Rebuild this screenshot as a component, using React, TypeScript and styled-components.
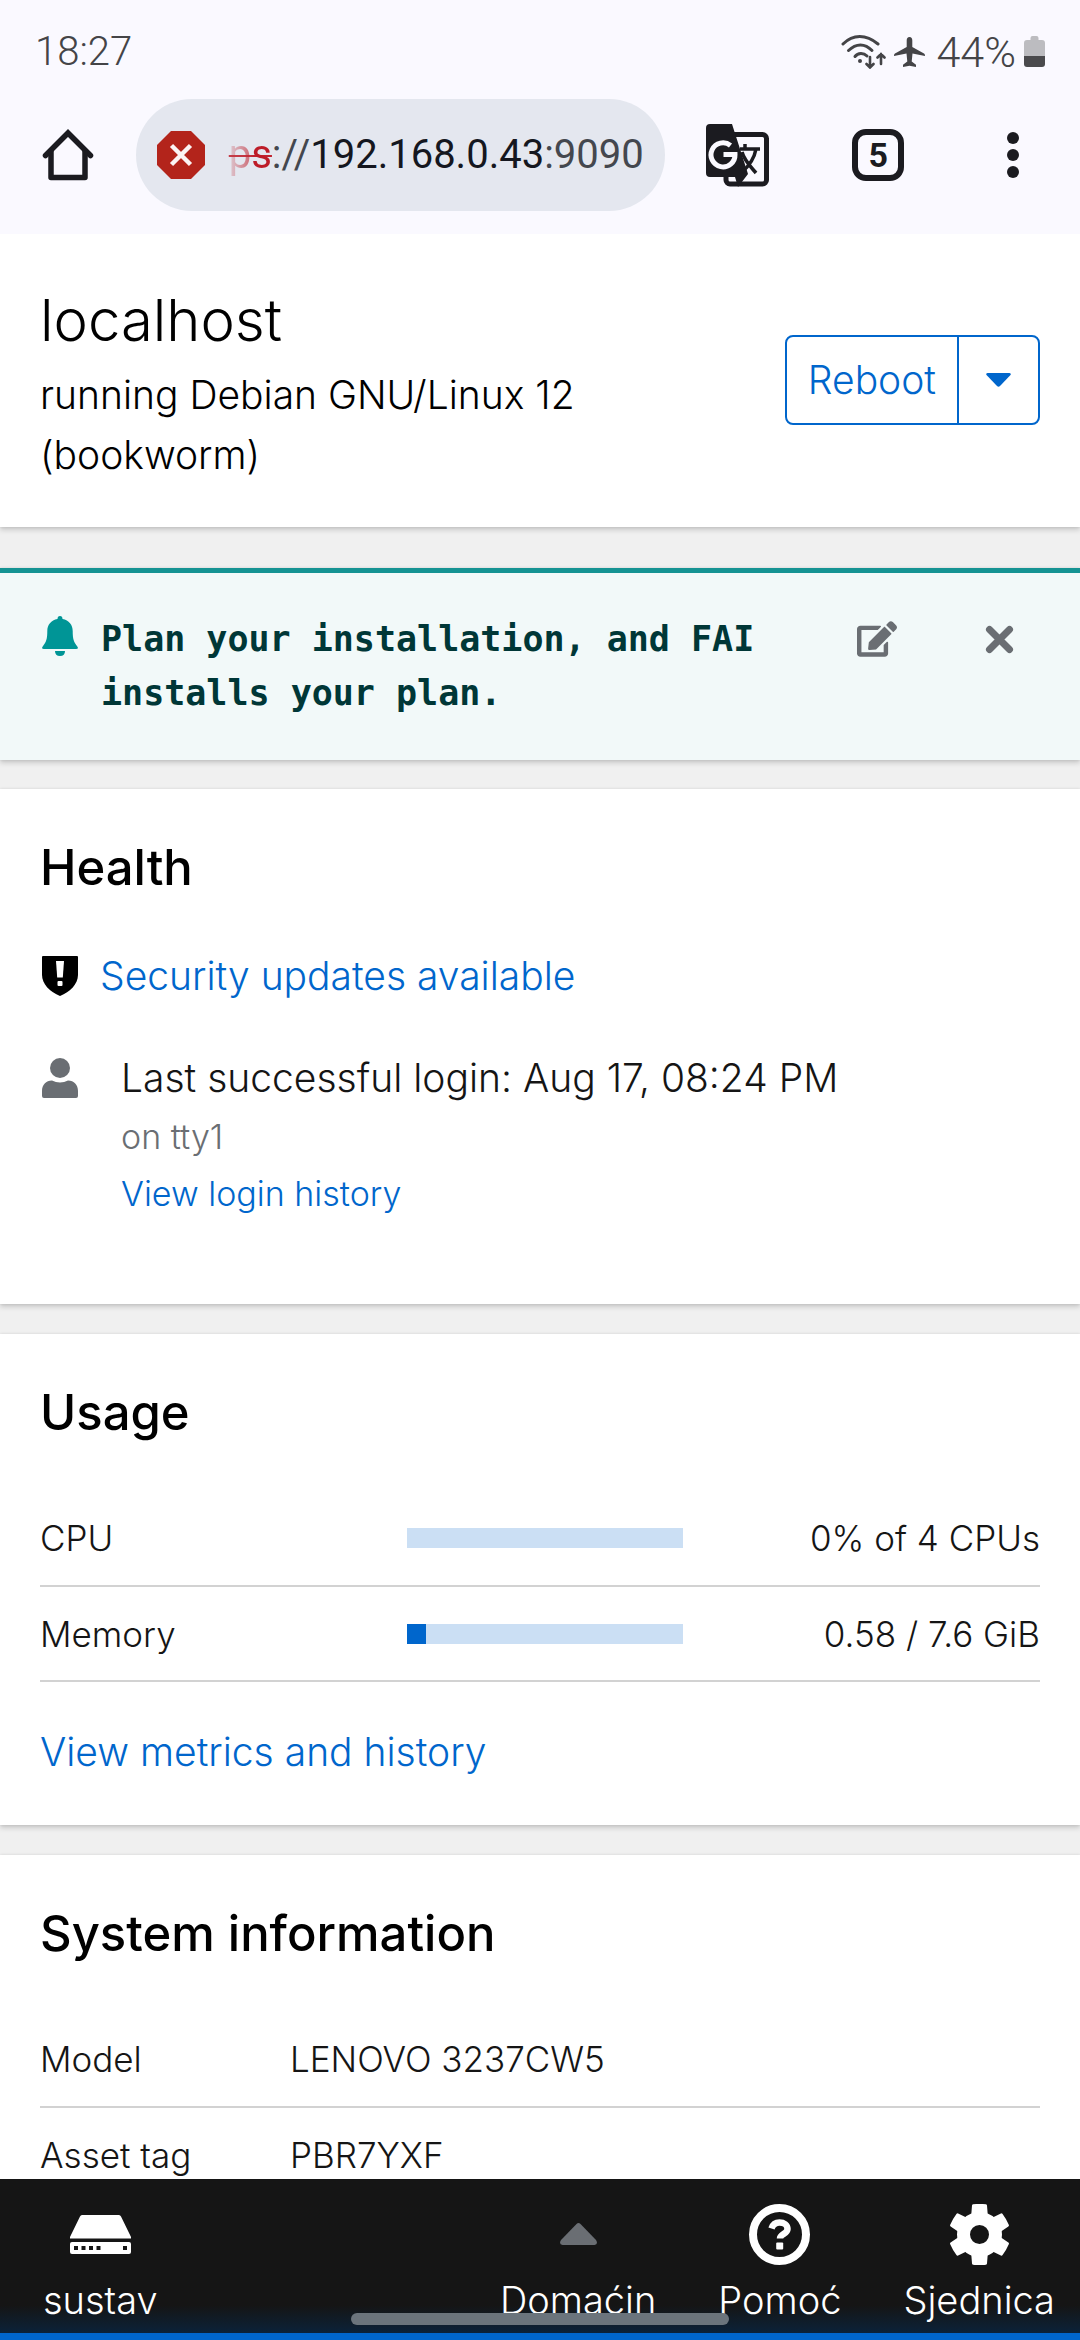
import React from 'react';
import styled, { createGlobalStyle } from 'styled-components';
import { FaEdit } from 'react-icons/fa';

const GlobalStyle = createGlobalStyle`
  *, *::before, *::after { box-sizing: border-box; }
  body {
    margin: 0;
    background: #f0f0f0;
    font-family: Inter, "Liberation Sans", sans-serif;
    font-size: 39px;
    font-weight: 350;
    line-height: 60px;
    color: #151515;
  }
  h1, h2, p, ul, dl, dd { margin: 0; padding: 0; }
  button { font: inherit; color: inherit; background: none; border: 0; padding: 0; }
  svg { display: block; flex: none; }
`;

const Screen = styled.div`
  position: relative;
  display: flex;
  flex-direction: column;
  height: 100vh;
  overflow: hidden;
`;

/* ---------- phone status bar and browser toolbar ---------- */

const Chrome = styled.header`
  flex: none;
  background: #faf9ff;
  padding-bottom: 23px;
  font-family: Roboto, sans-serif;
  font-size: 40px;
  font-weight: 400;
`;

const StatusBar = styled.div`
  display: flex;
  align-items: center;
  justify-content: space-between;
  height: 99px;
  padding: 4px 35px 0 35px;
  font-weight: 350;
  color: #444447;
`;

const StatusIcons = styled.div`
  display: flex;
  align-items: center;
  gap: 8px;
`;

const Percent = styled.span`
  margin-left: 4px;
  font-size: 43px;
`;

const Toolbar = styled.div`
  display: flex;
  align-items: center;
  color: #1b1b20;
`;

const ToolButton = styled.button<{ $width: number }>`
  display: flex;
  align-items: center;
  justify-content: center;
  width: ${(p) => p.$width}px;
  height: 112px;
`;

const AddressBar = styled.div`
  flex: 1;
  display: flex;
  align-items: center;
  gap: 24px;
  height: 112px;
  padding: 0 21px;
  border-radius: 56px;
  background: #e4e7ef;
`;

const Address = styled.div`
  white-space: nowrap;
  color: #44474e;
`;

const BadScheme = styled.s`
  color: transparent;
  background: linear-gradient(90deg, rgba(190, 28, 40, 0.15), rgba(190, 28, 40, 0.6) 50%, #bd1c28 58%);
  background-clip: text;
  -webkit-background-clip: text;
  text-decoration: line-through rgba(190, 28, 40, 0.8) 2px;
`;

const Host = styled.span`
  color: #15171f;
`;

const TabCount = styled.span`
  display: flex;
  align-items: center;
  justify-content: center;
  width: 52px;
  height: 52px;
  border: 6px solid #1b1b20;
  border-radius: 14px;
  font-size: 34px;
  font-weight: 700;
`;

/* ---------- page ---------- */

const Page = styled.main`
  flex: 1;
  min-height: 0;
  overflow: hidden;
  display: flex;
  flex-direction: column;
`;

const shadow = '0 3px 5px rgba(3, 3, 3, 0.16), 0 0 3px rgba(3, 3, 3, 0.1)';

const Heading = styled.section`
  flex: none;
  display: flex;
  align-items: center;
  justify-content: space-between;
  padding: 41px 40px 42px;
  background: #fff;
  box-shadow: ${shadow};
`;

const HostName = styled.h1`
  font-size: 58px;
  line-height: 90px;
  font-weight: 350;
  color: #000;
`;

const OsName = styled.p`
  max-width: 600px;
  color: #000;
`;

const SplitButton = styled.div`
  display: flex;
  height: 90px;
  border: 2px solid #0066cc;
  border-radius: 8px;
  color: #0066cc;
`;

const SplitPart = styled.button`
  display: flex;
  align-items: center;
  padding: 0 21px;

  & + & {
    padding: 0 27px;
    border-left: 2px solid #0066cc;
  }
`;

const Alert = styled.section`
  flex: none;
  display: flex;
  align-items: flex-start;
  margin: 41px 0 29px;
  padding: 39px 66px 40px 40px;
  border-top: 5px solid #159393;
  background: #f2f9f9;
  box-shadow: ${shadow};
`;

const AlertText = styled.p`
  flex: 1;
  margin-left: 21px;
  padding-right: 60px;
  font-family: "DejaVu Sans Mono", monospace;
  font-size: 35px;
  line-height: 54px;
  font-weight: 700;
  color: #003737;
`;

const AlertAction = styled.button`
  height: 54px;
  margin-left: 88px;
  color: #6a6e73;

  &:first-of-type { margin-left: 0; }
`;

const BellBox = styled.span`
  display: flex;
  justify-content: center;
  width: 40px;
  padding-top: 4px;
`;

const Card = styled.section`
  flex: none;
  margin-bottom: 30px;
  padding: 41px 40px 43px;
  background: #fff;
  box-shadow: ${shadow};
`;

const CardTitle = styled.h2`
  margin-bottom: 41px;
  font-size: 49px;
  line-height: 75px;
  font-weight: 500;
  color: #000;
`;

const Link = styled.a`
  color: #0066cc;
  text-decoration: none;
`;

const HealthList = styled.ul`
  display: flex;
  flex-direction: column;
  gap: 42px;
  padding-bottom: 39px;
  list-style: none;
`;

const HealthItem = styled.li<{ $gap: number }>`
  display: flex;
  align-items: flex-start;
  gap: ${(p) => p.$gap}px;
`;

const HealthIcon = styled.span<{ $color: string }>`
  display: flex;
  align-items: center;
  justify-content: center;
  width: 40px;
  height: 60px;
  color: ${(p) => p.$color};
`;

const LoginInfo = styled.div`
  display: flex;
  flex-direction: column;
  font-size: 34px;
  line-height: 57px;
  color: #6a6e73;
`;

const LoginLine = styled.p`
  font-size: 39px;
  line-height: 60px;
  color: #151515;
`;

const Table = styled.table`
  width: 100%;
  border-collapse: collapse;
  table-layout: fixed;
  font-size: 35px;
  line-height: 52px;
  font-weight: 300;
`;

const Row = styled.tr`
  border-bottom: 2px solid #d2d2d2;
`;

const Label = styled.th<{ $width: string }>`
  width: ${(p) => p.$width};
  height: 95px;
  padding: 0;
  text-align: left;
  font-weight: inherit;
`;

const Value = styled.td<{ $align?: string }>`
  padding: 0;
  text-align: ${(p) => p.$align ?? 'left'};
`;

const MeterCell = styled.td`
  width: 276px;
  padding: 0;
`;

const Meter = styled.div`
  height: 20px;
  background: #cbdff4;
`;

const MeterFill = styled.div`
  height: 100%;
  background: #0066cc;
`;

const CardFooter = styled.div`
  padding-top: 40px;
`;

/* ---------- bottom navigation ---------- */

const BottomNav = styled.nav`
  flex: none;
  display: flex;
  align-items: flex-start;
  padding: 19px 25px 3px 43px;
  border-bottom: 7px solid #0066cc;
  background: linear-gradient(#151515 82%, #0b2239);
  font-size: 38px;
  color: #fff;
`;

const NavButton = styled.button<{ $push?: boolean }>`
  display: flex;
  flex-direction: column;
  align-items: center;
  margin-left: ${(p) => (p.$push ? 'auto' : '0')};

  & + & + & { margin-left: 62px; }
`;

const NavIcon = styled.span<{ $dim?: boolean }>`
  display: flex;
  align-items: center;
  height: 72px;
  color: ${(p) => (p.$dim ? '#6a6e73' : 'inherit')};
`;

const GestureHandle = styled.div`
  position: absolute;
  left: 50%;
  bottom: 15px;
  width: 378px;
  height: 12px;
  margin-left: -189px;
  border-radius: 6px;
  background: #6b747c;
`;

/* ---------- icons ---------- */

const WifiIcon = () => (
  <svg width="45" height="34" viewBox="0 0 45 34" fill="none" stroke="currentColor" strokeWidth="3" strokeLinecap="round">
    <path d="M2 9C12-1 25-1 37 9" />
    <path d="M7.500 15.500C15 8 24 8 31 15.500" />
    <path d="M14 21.500C17 17.500 22.500 17.500 26 21" />
    <circle cx="19" cy="26" r="2" fill="currentColor" stroke="none" />
    <path d="M29 22v10M25.500 29l3.500 3.500 3.500-3.500M40 29V19M36.500 22.500L40 19l3.500 3.500" strokeWidth="2.600" />
  </svg>
);

const PlaneIcon = () => (
  <svg width="31" height="30" viewBox="0 0 31 30" fill="currentColor">
    <path d="M15.500 0c1.900 0 2.800 1.600 2.800 3.400V10L30 16.500c.8.500 1 1.300 1 2.500l-12.500-2.500-.8 8 4.300 3.200V30l-6.500-1.300L9 30v-2.300l4.300-3.200-.8-8L0 19c0-1.200.2-2 1-2.500L12.700 10V3.400C12.700 1.600 13.600 0 15.500 0z" />
  </svg>
);

const BatteryIcon = () => (
  <svg width="21" height="31" viewBox="0 0 21 31">
    <path d="M6.500 2q0-2 2-2h4q2 0 2 2v2H18q3 0 3 3v13H0V7q0-3 3-3h3.500z" fill="#bcbcc0" />
    <path d="M0 20h21v8q0 3-3 3H3q-3 0-3-3z" fill="#4a4a4d" />
  </svg>
);

const HomeIcon = () => (
  <svg width="52" height="52" viewBox="0 0 52 52" fill="none" stroke="currentColor" strokeWidth="5.500" strokeLinecap="round" strokeLinejoin="round">
    <path d="M3.500 26.500L26 4 48.500 26.500" strokeLinejoin="miter" />
    <path d="M9 22v26.500h34V22" />
  </svg>
);

const BlockedIcon = () => (
  <svg width="48" height="48" viewBox="0 0 48 48">
    <path d="M14 0h20l14 14v20L34 48H14L0 34V14z" fill="#b3241b" />
    <path d="M14.500 14.500l19 19M33.500 14.500l-19 19" stroke="#fbf3f3" strokeWidth="4.500" />
  </svg>
);

const TranslateIcon = () => (
  <svg width="63" height="63" viewBox="0 0 63 63">
    <rect x="20" y="10.500" width="40.500" height="49.500" rx="4" fill="none" stroke="currentColor" strokeWidth="5" />
    <path d="M4 0h22l16 50-10 13-3-10H4q-4 0-4-4V4q0-4 4-4z" fill="currentColor" />
    <path d="M34 25h20M39 20v5M36 28c2 8 8 14 14 21M50 25c-2 11-7 17-14 23" fill="none" stroke="currentColor" strokeWidth="3.500" />
    <path d="M24.500 21.500A12 12 0 1 0 29 30.500H17.500" fill="none" stroke="#faf9ff" strokeWidth="5" />
  </svg>
);

const DotsIcon = () => (
  <svg width="12" height="46" viewBox="0 0 12 46" fill="currentColor">
    <circle cx="6" cy="6" r="6" />
    <circle cx="6" cy="23" r="6" />
    <circle cx="6" cy="40" r="6" />
  </svg>
);

const CaretDown = () => (
  <svg width="25" height="14" viewBox="0 0 25 14" fill="currentColor">
    <path d="M1.500 0h22q2 .5 1 2L14 13q-1.500 1.500-3 0L.5 2q-1-1.500 1-2z" />
  </svg>
);

const BellIcon = () => (
  <svg width="36" height="40" viewBox="0 0 36 40" fill="#009596">
    <path d="M18 0q2.500 0 2.500 3c6.500 1 10.200 6 10.200 12 0 8 1 11 4.600 15.500Q37 33 34 33H2q-3 0-1.300-2.500C4.300 26 5.300 23 5.300 15c0-6 3.700-11 10.200-12Q15.500 0 18 0z" />
    <path d="M13 35h10q0 5-5 5t-5-5z" />
  </svg>
);

const CloseIcon = () => (
  <svg width="29" height="29" viewBox="0 0 29 29" fill="none" stroke="currentColor" strokeWidth="7" strokeLinecap="round">
    <path d="M4.500 4.500l20 20M24.500 4.500l-20 20" />
  </svg>
);

const ShieldIcon = () => (
  <svg width="36" height="40" viewBox="0 0 36 40">
    <path d="M1 0h34q1 0 1 1v18c0 9-8 17-18 21C8 36 0 28 0 19V1q0-1 1-1z" fill="currentColor" />
    <path d="M14 5h8l-1.200 16.500h-5.600z" fill="#fff" />
    <rect x="15.500" y="25" width="5" height="5" rx="1" fill="#fff" />
  </svg>
);

const UserIcon = () => (
  <svg width="36" height="40" viewBox="0 0 36 40" fill="currentColor">
    <circle cx="18" cy="10" r="10" />
    <path d="M10 22.500c5 2.500 11 2.500 16 0 6 0 10 4.500 10 10.500v5q0 2-2 2H2q-2 0-2-2v-5c0-6 4-10.500 10-10.500z" />
  </svg>
);

const ServerIcon = () => (
  <svg width="61" height="39" viewBox="0 0 61 39">
    <path d="M12 0h37q1.300 0 2 1.500L61 22v1.500H0V22L10 1.500Q10.700 0 12 0z" fill="currentColor" />
    <rect y="27" width="61" height="12" rx="2" fill="currentColor" />
    <path d="M4 31h4v4H4zM11.500 31h4v4h-4zM19 31h4v4h-4zM26.500 31h4v4h-4zM53 31h4v4h-4z" fill="#151515" />
  </svg>
);

const CaretUp = () => (
  <svg width="37" height="22" viewBox="0 0 37 22" fill="currentColor">
    <path d="M16.500 1q2-2 4 0L36 17q2.500 4-1.500 5h-32Q-1.500 21 1 17z" />
  </svg>
);

const HelpIcon = () => (
  <svg width="61" height="61" viewBox="0 0 61 61">
    <circle cx="30.500" cy="30.500" r="26.500" fill="none" stroke="currentColor" strokeWidth="8" />
    <path d="M22.500 24.500c1.500-4.500 4.500-6 8-6 4.500 0 8 2.500 8 6.500 0 5-7.500 5-7.500 9.500" fill="none" stroke="currentColor" strokeWidth="6.500" />
    <rect x="27.200" y="38.500" width="7" height="7" rx="1" fill="currentColor" />
  </svg>
);

const teeth = [0, 60, 120, 180, 240, 300];
const GearIcon = () => (
  <svg width="61" height="61" viewBox="0 0 61 61">
    <g fill="currentColor">
      {teeth.map((angle) => (
        <path key={angle} d="M23 1.500q0-1 1-1.200 6.500-.8 13 0 1 .2 1 1.200L39 14H22z" transform={`rotate(${angle} 30.500 30.500)`} />
      ))}
    </g>
    <circle cx="30.500" cy="30.500" r="16" fill="none" stroke="currentColor" strokeWidth="13" />
  </svg>
);

/* ---------- data ---------- */

const usage = [
  { name: 'CPU', used: 0, text: '0% of 4 CPUs' },
  { name: 'Memory', used: 7, text: '0.58 / 7.6 GiB' },
];

const systemInfo = [
  { name: 'Model', value: 'LENOVO 3237CW5' },
  { name: 'Asset tag', value: 'PBR7YXF' },
];

export default function App() {
  return (
    <>
      <GlobalStyle />
      <Screen>
        <Chrome>
          <StatusBar>
            <span>18:27</span>
            <StatusIcons>
              <WifiIcon />
              <PlaneIcon />
              <Percent>44%</Percent>
              <BatteryIcon />
            </StatusIcons>
          </StatusBar>
          <Toolbar>
            <ToolButton $width={136} aria-label="Home"><HomeIcon /></ToolButton>
            <AddressBar>
              <BlockedIcon />
              <Address>
                <BadScheme>ps</BadScheme>://<Host>192.168.0.43</Host>:9090
              </Address>
            </AddressBar>
            <ToolButton $width={146} aria-label="Translate"><TranslateIcon /></ToolButton>
            <ToolButton $width={136} aria-label="Tabs"><TabCount>5</TabCount></ToolButton>
            <ToolButton $width={134} aria-label="Menu"><DotsIcon /></ToolButton>
          </Toolbar>
        </Chrome>

        <Page>
          <Heading>
            <div>
              <HostName>localhost</HostName>
              <OsName>running Debian GNU/Linux 12 (bookworm)</OsName>
            </div>
            <SplitButton>
              <SplitPart>Reboot</SplitPart>
              <SplitPart aria-label="More actions"><CaretDown /></SplitPart>
            </SplitButton>
          </Heading>

          <Alert>
            <BellBox><BellIcon /></BellBox>
            <AlertText>Plan your installation, and FAI installs your plan.</AlertText>
            <AlertAction aria-label="Edit"><FaEdit size={40} /></AlertAction>
            <AlertAction aria-label="Close"><CloseIcon /></AlertAction>
          </Alert>

          <Card>
            <CardTitle>Health</CardTitle>
            <HealthList>
              <HealthItem $gap={20}>
                <HealthIcon $color="#000"><ShieldIcon /></HealthIcon>
                <Link href="#updates">Security updates available</Link>
              </HealthItem>
              <HealthItem $gap={41}>
                <HealthIcon $color="#6a6e73"><UserIcon /></HealthIcon>
                <LoginInfo>
                  <LoginLine>Last successful login: Aug 17, 08:24 PM</LoginLine>
                  <span>on tty1</span>
                  <Link href="#logins">View login history</Link>
                </LoginInfo>
              </HealthItem>
            </HealthList>
          </Card>

          <Card>
            <CardTitle>Usage</CardTitle>
            <Table>
              <tbody>
                {usage.map((row) => (
                  <Row key={row.name}>
                    <Label scope="row" $width="367px">{row.name}</Label>
                    <MeterCell>
                      <Meter><MeterFill style={{ width: `${row.used}%` }} /></Meter>
                    </MeterCell>
                    <Value $align="right">{row.text}</Value>
                  </Row>
                ))}
              </tbody>
            </Table>
            <CardFooter><Link href="#metrics">View metrics and history</Link></CardFooter>
          </Card>

          <Card>
            <CardTitle>System information</CardTitle>
            <Table>
              <tbody>
                {systemInfo.map((row) => (
                  <Row key={row.name}>
                    <Label scope="row" $width="25%">{row.name}</Label>
                    <Value>{row.value}</Value>
                  </Row>
                ))}
              </tbody>
            </Table>
          </Card>
        </Page>

        <BottomNav>
          <NavButton><NavIcon><ServerIcon /></NavIcon>sustav</NavButton>
          <NavButton $push><NavIcon $dim><CaretUp /></NavIcon>Domaćin</NavButton>
          <NavButton><NavIcon><HelpIcon /></NavIcon>Pomoć</NavButton>
          <NavButton><NavIcon><GearIcon /></NavIcon>Sjednica</NavButton>
        </BottomNav>
        <GestureHandle />
      </Screen>
    </>
  );
}
